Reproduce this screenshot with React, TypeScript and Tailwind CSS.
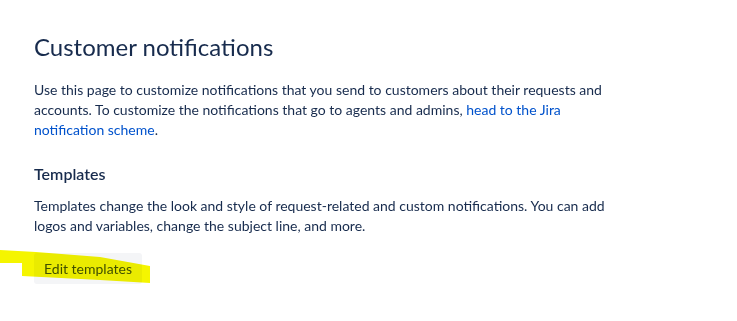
export default function App() {
  return (
    <div className="relative min-h-[321px] w-[737px] bg-white font-['Lato','Noto_Sans',sans-serif] text-[#172b4d]">
      <div className="pl-[34px] pr-[40px] pt-[31px]">
        <h1 className="text-[24px] leading-[32px] font-normal">Customer notifications</h1>
        <p className="mt-[17px] w-[590px] text-[14px] leading-[20px]">
          Use this page to customize notifications that you send to customers about their requests and
          accounts. To customize the notifications that go to agents and admins,{" "}
          <a className="text-[#0052cc]">head to the Jira</a>{" "}
          <a className="text-[#0052cc]">notification scheme</a>.
        </p>
        <h2 className="mt-[24px] text-[16px] leading-[20px] font-semibold">Templates</h2>
        <p className="mt-[12px] w-[590px] text-[14px] leading-[20px]">
          Templates change the look and style of request-related and custom notifications. You can add
          logos and variables, change the subject line, and more.
        </p>
        <button className="mt-[17px] h-[31px] rounded-[3px] bg-[#f4f5f7] px-[10px] text-[14px] text-[#42526e]">
          Edit templates
        </button>
      </div>
      <svg className="pointer-events-none absolute left-0 top-0 mix-blend-multiply" width="160" height="300">
        <polygon
          points="0,250 36,252 100,257 150,266 150,283 100,280 22,276 22,263 0,263"
          fill="#f5f500"
        />
      </svg>
    </div>
  );
}
